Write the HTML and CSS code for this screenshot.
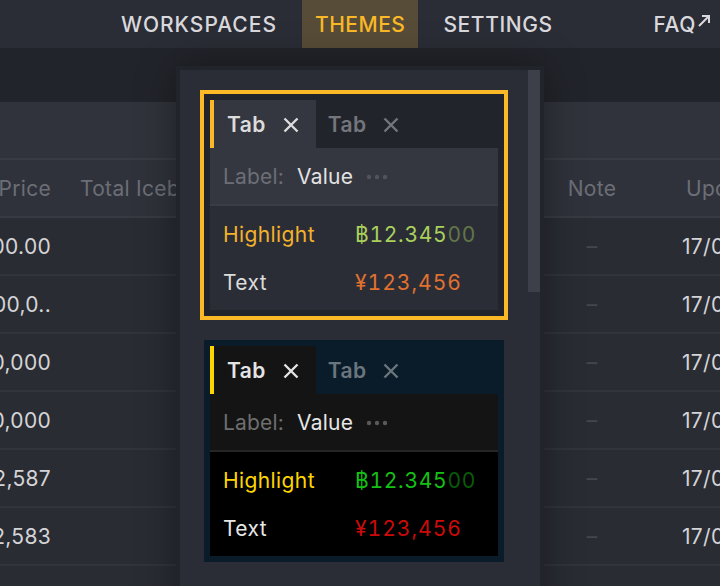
FILE: index.html
```html
<!DOCTYPE html>
<html lang="en">
<head>
<meta charset="utf-8">
<title>Themes</title>
<link rel="stylesheet" href="styles.css">
</head>
<body>
<div class="app">
  <header class="nav">
    <a class="nav-item wide">WORKSPACES</a>
    <a class="nav-item active">THEMES</a>
    <a class="nav-item">SETTINGS</a>
    <a class="nav-item faq">FAQ<svg class="ext" width="14" height="14" viewBox="0 0 14 14"><path d="M2 12 L12 2 M5 2 H12 V9" fill="none" stroke="currentColor" stroke-width="2"/></svg></a>
  </header>
  <main class="main">
    <div class="table">
      <div class="toolbar"></div>
      <div class="row head">
        <div class="c price">Price</div>
        <div class="c total">Total Iceberg</div>
        <div class="c note">Note</div>
        <div class="c upd">Updated</div>
      </div>
      <div class="row"><div class="c price">100.00</div><div class="c total"></div><div class="c note dash">–</div><div class="c upd">17/05/2019 10:21</div></div>
      <div class="row"><div class="c price">1,000,0..</div><div class="c total"></div><div class="c note dash">–</div><div class="c upd">17/05/2019 10:21</div></div>
      <div class="row"><div class="c price">10,000</div><div class="c total"></div><div class="c note dash">–</div><div class="c upd">17/05/2019 10:21</div></div>
      <div class="row"><div class="c price">10,000</div><div class="c total"></div><div class="c note dash">–</div><div class="c upd">17/05/2019 10:21</div></div>
      <div class="row"><div class="c price">12,587</div><div class="c total"></div><div class="c note dash">–</div><div class="c upd">17/05/2019 10:21</div></div>
      <div class="row"><div class="c price">12,583</div><div class="c total"></div><div class="c note dash">–</div><div class="c upd">17/05/2019 10:21</div></div>
      <div class="row"><div class="c price"></div><div class="c total"></div><div class="c note"></div><div class="c upd"></div></div>
    </div>

    <div class="panel">
      <div class="themes">
        <div class="frame selected">
          <div class="preview theme-dark">
            <div class="tabs">
              <div class="tab active">Tab<svg class="x" viewBox="0 0 16 16"><path d="M1.5 1.5 L14.5 14.5 M14.5 1.5 L1.5 14.5"/></svg></div>
              <div class="tab">Tab<svg class="x" viewBox="0 0 16 16"><path d="M1.5 1.5 L14.5 14.5 M14.5 1.5 L1.5 14.5"/></svg></div>
            </div>
            <div class="labelrow">
              <span class="lbl">Label:</span>
              <span class="val">Value</span>
              <svg class="dots" width="22" height="6" viewBox="0 0 22 6"><circle cx="3" cy="3" r="2.2"/><circle cx="11" cy="3" r="2.2"/><circle cx="19" cy="3" r="2.2"/></svg>
            </div>
            <div class="sep"></div>
            <div class="body">
              <div class="line"><span class="hl">Highlight</span><span class="pos">฿12.345<span class="dim">00</span></span></div>
              <div class="line"><span class="txt">Text</span><span class="neg">¥123,456</span></div>
            </div>
          </div>
        </div>
        <div class="frame">
          <div class="preview theme-contrast">
            <div class="tabs">
              <div class="tab active">Tab<svg class="x" viewBox="0 0 16 16"><path d="M1.5 1.5 L14.5 14.5 M14.5 1.5 L1.5 14.5"/></svg></div>
              <div class="tab">Tab<svg class="x" viewBox="0 0 16 16"><path d="M1.5 1.5 L14.5 14.5 M14.5 1.5 L1.5 14.5"/></svg></div>
            </div>
            <div class="labelrow">
              <span class="lbl">Label:</span>
              <span class="val">Value</span>
              <svg class="dots" width="22" height="6" viewBox="0 0 22 6"><circle cx="3" cy="3" r="2.2"/><circle cx="11" cy="3" r="2.2"/><circle cx="19" cy="3" r="2.2"/></svg>
            </div>
            <div class="sep"></div>
            <div class="body">
              <div class="line"><span class="hl">Highlight</span><span class="pos">฿12.345<span class="dim">00</span></span></div>
              <div class="line"><span class="txt">Text</span><span class="neg">¥123,456</span></div>
            </div>
          </div>
        </div>
      </div>
      <div class="scroll-thumb"></div>
    </div>
  </main>
</div>
</body>
</html>
```
FILE: styles.css
```css
* { box-sizing: border-box; }
html, body { margin: 0; padding: 0; }
body {
  width: 720px;
  height: 586px;
  overflow: hidden;
  background: #22242b;
  font-family: Inter, "Noto Sans", "Liberation Sans", sans-serif;
  color: #d6d6d8;
}
.app { width: 720px; height: 586px; display: flex; flex-direction: column; }

/* nav */
.nav {
  height: 48px;
  flex: none;
  background: #2b2d36;
  display: flex;
  align-items: stretch;
  padding-left: 108px;
  padding-right: 9px;
  gap: 12px;
}
.nav-item {
  display: flex;
  align-items: center;
  padding: 1px 13px 0;
  font-size: 21px;
  font-weight: 500;
  letter-spacing: 0.6px;
  color: #d9d9dd;
}
.nav-item.wide { letter-spacing: 1px; }
.nav-item.active { background: #574c37; color: #fbb928; letter-spacing: 0.5px; }
.nav-item.faq { margin-left: auto; padding-right: 0; gap: 1px; }
.ext { margin-top: -7px; }

/* main */
.main { position: relative; flex: 1; padding-top: 54px; }

.table { width: 720px; }
.toolbar { height: 58px; background: #31333c; border-bottom: 2px solid #393b44; }
.row {
  height: 58px;
  display: grid;
  grid-template-columns: 51px 517px 48px 1fr;
  align-items: center;
  background: #2a2c34;
  border-bottom: 2px solid #32343c;
  font-size: 21px;
  letter-spacing: 0.3px;
  color: #d4d4d6;
  white-space: nowrap;
}
.row.head { background: #30323b; border-bottom-color: #383a43; color: #6c6e76; }
.c { overflow: visible; }
.price { display: flex; justify-content: flex-end; }
.total { padding-left: 29px; }
.note { display: flex; justify-content: center; }
.dash { color: #45474e; }
.upd { padding-left: 66px; }
.head .upd { padding-left: 70px; }

/* panel */
.panel {
  position: absolute;
  top: 22px;
  left: 180px;
  width: 360px;
  bottom: 0;
  background: #2b2d36;
  box-shadow: 0 0 0 4px #22242b, 0 0 40px rgba(0,0,0,0.45);
}
.themes {
  padding: 20px 0 0 20px;
  display: flex;
  flex-direction: column;
  gap: 16px;
}
.scroll-thumb {
  position: absolute;
  top: 0;
  right: 0;
  width: 12px;
  height: 222px;
  background: #3e4049;
}
.frame {
  width: 308px;
  border: 4px solid transparent;
}
.frame.selected { border-color: #fbb928; }

.preview {
  padding: 6px;
  background: var(--bar);
  font-size: 21px;
  letter-spacing: 0.4px;
}
.theme-dark {
  --bar: #22242b;
  --surface2: #353740;
  --surface: #2b2d36;
  --sep: #3b3d46;
  --accent: #fbb928;
  --tab-text: #dcdcdc;
  --tab-inactive: #74767d;
  --label: #6c6e76;
  --value: #e2e2e2;
  --dots: #52545c;
  --hl: #f4b12b;
  --green: #a9d05b;
  --green-dim: #637548;
  --red: #e0712f;
  --text: #dcdcdc;
}
.theme-contrast {
  --bar: #0a1c2a;
  --surface2: #141414;
  --surface: #000000;
  --sep: #262626;
  --accent: #ffd500;
  --tab-text: #e4e4e4;
  --tab-inactive: #6b757d;
  --label: #6e6e6e;
  --value: #e6e6e6;
  --dots: #5a5a5a;
  --hl: #ffd500;
  --green: #14c014;
  --green-dim: #0a5a0a;
  --red: #cc0a0a;
  --text: #e6e6e6;
}
.tabs { display: flex; height: 48px; }
.tab {
  display: flex;
  align-items: center;
  gap: 17px;
  padding: 1px 17px 0 12px;
  font-weight: 600;
  color: var(--tab-inactive);
}
.tab.active {
  background: var(--surface2);
  border-left: 4px solid var(--accent);
  padding-left: 13px;
  color: var(--tab-text);
}
.x { width: 16px; height: 16px; fill: none; stroke: currentColor; stroke-width: 2.4; flex: none; }

.labelrow {
  height: 56px;
  background: var(--surface2);
  display: flex;
  align-items: center;
  gap: 13px;
  padding: 1px 13px 0;
}
.lbl { color: var(--label); letter-spacing: 0.2px; }
.val { color: var(--value); letter-spacing: 0.2px; }
.dots { fill: var(--dots); }
.sep { height: 2px; background: var(--sep); }
.body { background: var(--surface); padding: 4px 13px; }
.line {
  height: 48px;
  display: grid;
  grid-template-columns: 132px 1fr;
  align-items: center;
}
.hl { color: var(--hl); }
.txt { color: var(--text); }
.pos, .neg { font-variant-numeric: tabular-nums; letter-spacing: 1px; }
.pos { color: var(--green); letter-spacing: 0.7px; }
.dim { color: var(--green-dim); }
.neg { color: var(--red); }
```
